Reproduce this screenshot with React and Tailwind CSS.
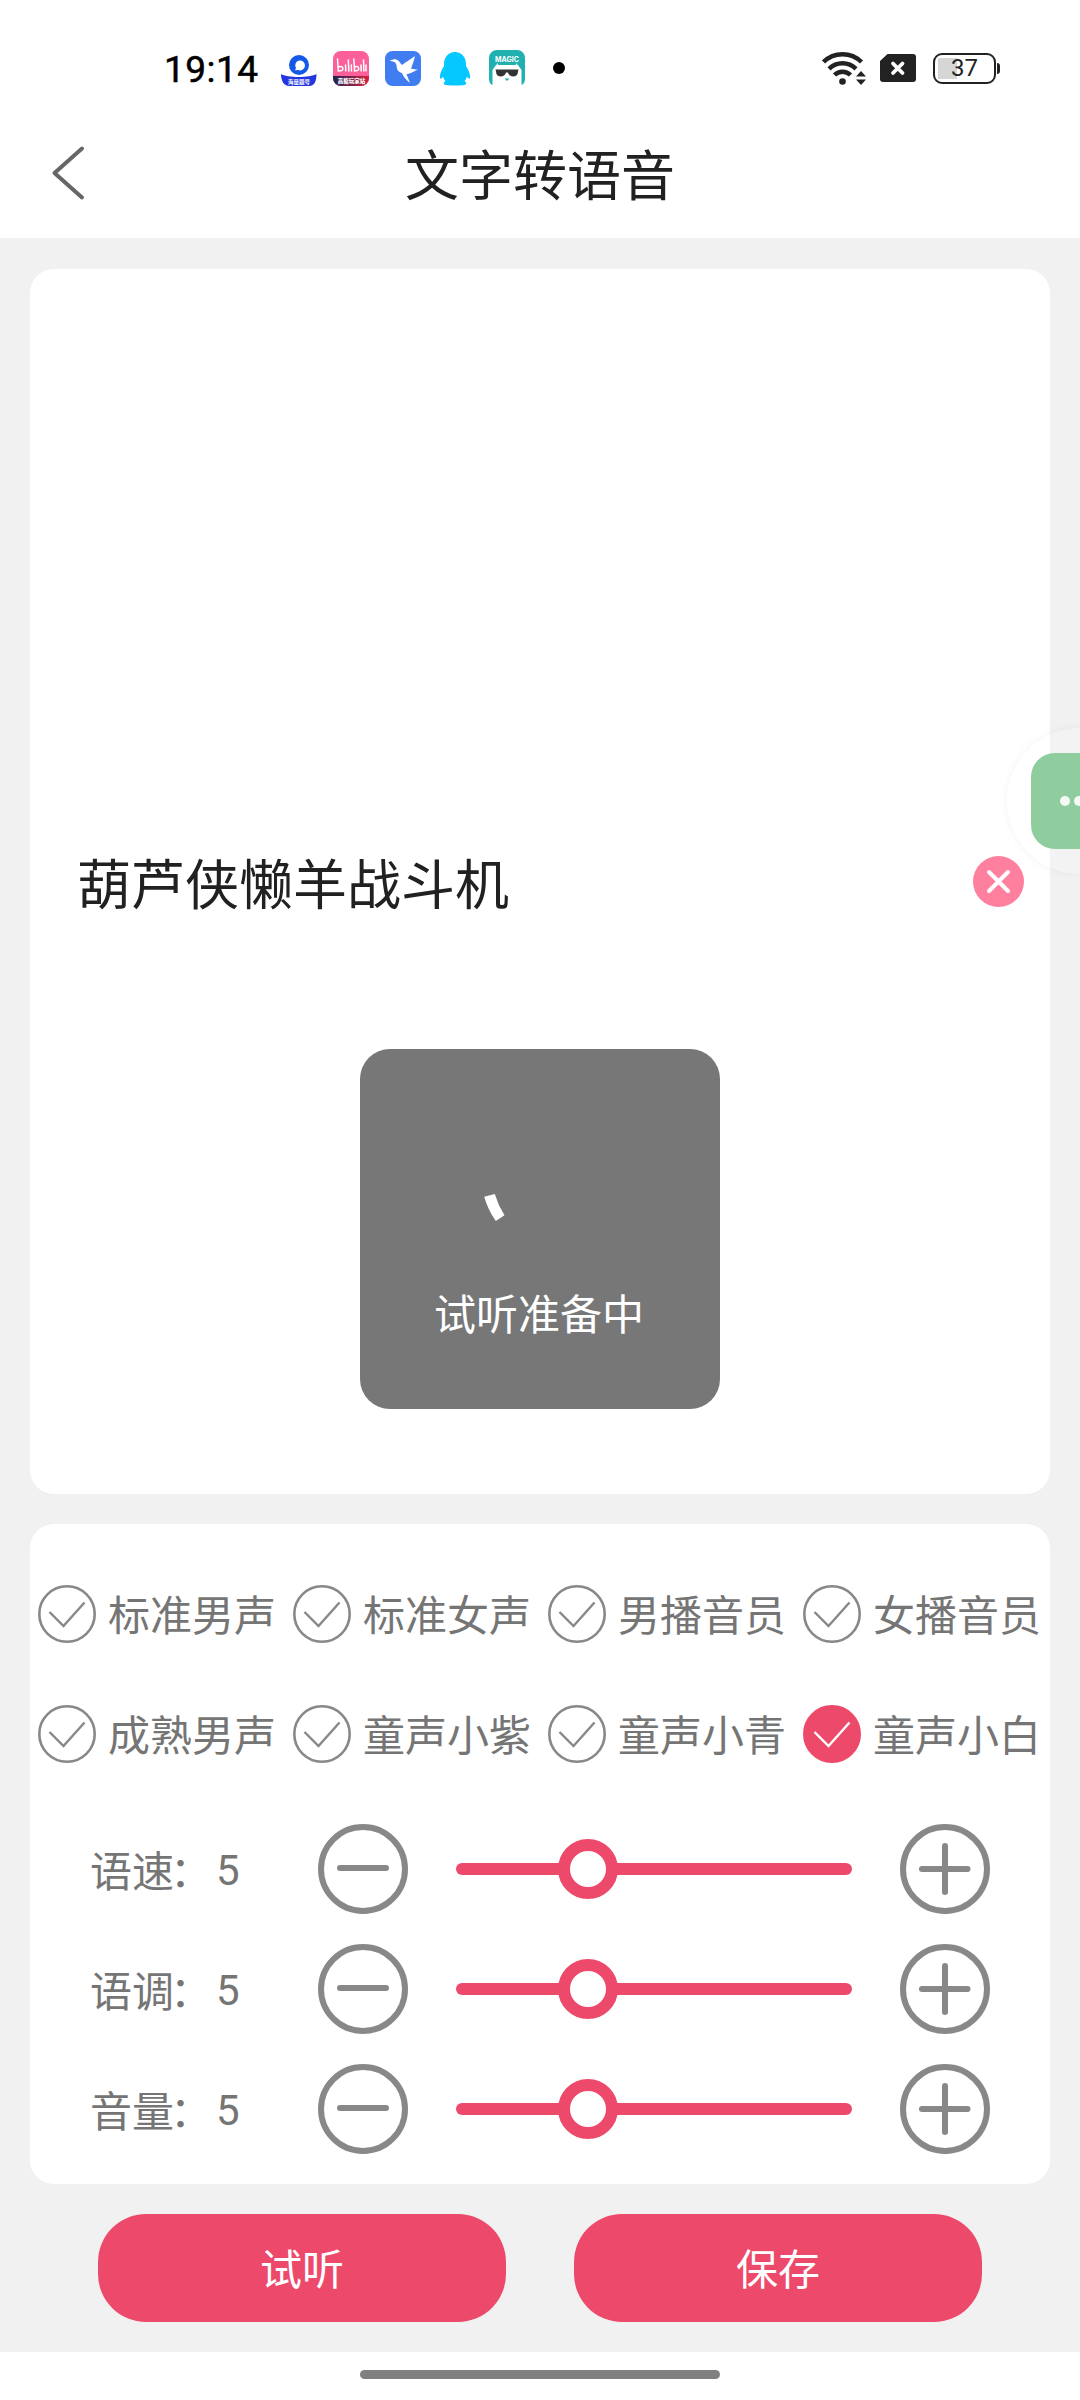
import React, { useState } from "react";

const VOICES = [
  "标准男声",
  "标准女声",
  "男播音员",
  "女播音员",
  "成熟男声",
  "童声小紫",
  "童声小青",
  "童声小白",
];

const MIN = 0;
const MAX = 15;

function StatusBar() {
  return (
    <div className="flex h-[136px] items-center pl-[164px] pr-[80px]">
      <span className="w-[117px] pt-[2px] font-['Roboto'] text-[37px] leading-none tracking-[0.5px] text-black [-webkit-text-stroke:0.5px_black]">
        19:14
      </span>
      <div className="flex items-center gap-4">
        <svg className="h-9 w-9" viewBox="0 0 36 36">
          <circle cx="18" cy="15" r="10" fill="#1458e8" />
          <path d="M18 10.5a5 5 0 1 1-1 9.500l-3 .2 1-2.200a5 5 0 0 1 3-7.500z" fill="#fff" />
          <path d="M0 24c6 4 29 4 35.500 0 0 7-2 12-7 12H8c-5 0-8-5-8-12z" fill="#2436e0" />
          <text x="18" y="33.500" textAnchor="middle" fontSize="5.500" fontWeight="700" fill="#fff" fontFamily="Noto Sans CJK SC">
            海量题号
          </text>
        </svg>
        <svg className="h-9 w-9" viewBox="0 0 36 36">
          <defs>
            <linearGradient id="bili" x1="0" x2="1">
              <stop offset="0" stopColor="#1c2350" />
              <stop offset="1" stopColor="#d8203c" />
            </linearGradient>
            <clipPath id="biliClip">
              <rect y="1" width="36" height="35" rx="8" />
            </clipPath>
          </defs>
          <g clipPath="url(#biliClip)">
            <rect y="1" width="36" height="35" fill="#fb609a" />
            <rect y="26" width="36" height="11" fill="url(#bili)" />
          </g>
          <g fill="none" stroke="#fff" strokeWidth="1.500" strokeLinecap="round">
            <path d="M4.500 9l.8 12c4 0 5-1.500 4.500-3s-2-2-4-1M12.500 15l.3 6M15.300 10l.5 11M18.300 15l.2 6" />
            <path d="M20.800 9l.8 12c4 0 4.500-1.500 4-3s-2-2-4-1M28 15l.2 6M30.500 10l.4 11M33 15v6" />
          </g>
          <text x="18.500" y="33" textAnchor="middle" fontSize="5.500" fontWeight="800" fill="#fff" fontFamily="Noto Sans CJK SC">
            高能玩家站
          </text>
        </svg>
        <svg className="h-9 w-9" viewBox="0 0 36 36">
          <rect y="1" width="36" height="35" rx="7.500" fill="#3f7df0" />
          <path
            d="M4.500 10.500C8 10 9 9 11 9.500c3 .7 4 3.500 6 5.500 4-3 8-5.500 13-9-1 4-2.500 9-4 12.500 2.500.8 5 1 7 1-3 1.500-6 3-8.500 4-2 .6-3 .5-3 .5l3.500 9c-4-3.500-7-6.500-8-10-2-.5-4.500-2-5-4.500-.4-3-.5-5-2.500-6.500z"
            fill="#fff"
          />
        </svg>
        <svg className="h-9 w-9" viewBox="0 0 36 36">
          <path
            d="M18 2c6.500 0 11 5 11 12v2c2.500 4 4.500 8 4 12-.3 1.300-1.800.5-3-1.500-.5 2-1.500 3.500-2.500 4.500 1.500.8 2 2 1.500 3s-3 1.500-11 1.500-10.500-.5-11-1.500 0-2.200 1.500-3c-1-1-2-2.500-2.500-4.500-1.200 2-2.700 2.800-3 1.500-.5-4 1.500-8 4-12v-2c0-7 4.500-12 11-12z"
            fill="#04c8ff"
          />
        </svg>
        <svg className="h-9 w-9" viewBox="0 0 36 36">
          <path d="M8 0h20a8 8 0 0 1 8 8v20c0 4-1 6-3.500 7V20L29 15H7l-3.500 5v15C1 34 0 32 0 28V8a8 8 0 0 1 8-8z" fill="#20b0b0" />
          <path d="M8 13l3 4h14l3-4 1 9c1 7-4 12-11 12S5 29 6 22z" fill="#fff" />
          <path d="M6.500 19.500h23l-1 4.500c-1 3.500-8.500 3.500-9.500-1.500h-2c-1 5-8.500 5-9.500 1.500z" fill="#333" />
          <path d="M15.500 28.500h5l-2.500 2.500z" fill="#20b0b0" />
          <text x="18" y="11.500" textAnchor="middle" fontSize="7" fontWeight="700" fill="#fff" fontFamily="Inter">
            MAGIC
          </text>
        </svg>
      </div>
      <span className="ml-7 h-3 w-3 rounded-full bg-black" />

      <div className="ml-auto flex items-center">
        <svg className="h-9 w-[46px]" viewBox="0 0 46 36">
          <g fill="none" stroke="#222" strokeWidth="4.500">
            <path d="M1.500 12a27 27 0 0 1 38 0" />
            <path d="M7 18.800a19.500 19.500 0 0 1 27 0" />
            <path d="M12.500 25a11.500 11.500 0 0 1 16 0" />
          </g>
          <circle cx="20.500" cy="31.500" r="3.300" fill="#222" />
          <path d="M34 26.500l5-5.500 5 5.500zM34 29.500l5 5.500 5-5.500z" fill="#222" />
        </svg>
        <svg className="ml-3 h-7 w-9" viewBox="0 0 36 28">
          <path d="M7.500 0H33a3 3 0 0 1 3 3v22a3 3 0 0 1-3 3H3a3 3 0 0 1-3-3V7z" fill="#222" />
          <path d="M13 9.500l9.500 9.500M22.500 9.500L13 19" stroke="#fff" strokeWidth="3.800" strokeLinecap="round" />
        </svg>
        <div className="ml-[17px] flex h-[31px] w-[63px] items-center justify-center rounded-[9px] border-[2.500px] border-[#222] bg-white bg-[linear-gradient(#d6d6d6,#d6d6d6)] bg-[length:19px_21px] bg-[position:3px_center] bg-no-repeat font-['Roboto'] text-[24px] leading-none text-[#222]">
          37
        </div>
        <span className="ml-[1px] h-[11px] w-[3px] rounded-r-sm bg-[#222]" />
      </div>
    </div>
  );
}

function CheckIcon({ checked }) {
  return (
    <svg className="h-[58px] w-[58px] shrink-0" viewBox="0 0 58 58" fill="none">
      <circle
        cx="29"
        cy="29"
        r="27.700"
        fill={checked ? "#ed4a6b" : "none"}
        stroke={checked ? "#ed4a6b" : "#888"}
        strokeWidth="2.600"
      />
      <path
        d="M11.500 27L25.500 41L46.500 17.500"
        stroke={checked ? "#fff" : "#888"}
        strokeWidth="2.400"
      />
    </svg>
  );
}

function RoundButton({ type, onClick }) {
  return (
    <button onClick={onClick} className="shrink-0">
      <svg className="h-[90px] w-[90px]" viewBox="0 0 90 90" fill="none" stroke="#888" strokeWidth="6" strokeLinecap="round">
        <circle cx="45" cy="45" r="42" />
        <path d={type === "plus" ? "M22 45H67.500M45 22V68" : "M22 44H68"} />
      </svg>
    </button>
  );
}

function SliderRow({ label, value, onChange }) {
  return (
    <div className="flex h-[120px] items-center pl-[60px]">
      <div className="flex w-[228px] items-center text-[42px] leading-[50px]">
        <span>{label}</span>
        <span className="-ml-1 w-[46px]">：</span>
        <span className="pt-[3px] font-['Roboto']">{value}</span>
      </div>
      <RoundButton type="minus" onClick={() => onChange(Math.max(MIN, value - 1))} />
      <div className="relative mx-12 h-3 w-[396px] rounded-full bg-[#ed4a6b]">
        <span
          className="absolute top-1/2 h-[60px] w-[60px] -translate-x-1/2 -translate-y-1/2 rounded-full border-[12px] border-[#ed4a6b] bg-white"
          style={{ left: `${(value / MAX) * 100}%` }}
        />
      </div>
      <RoundButton type="plus" onClick={() => onChange(Math.min(MAX, value + 1))} />
    </div>
  );
}

function LoadingToast() {
  return (
    <div className="absolute top-[1049px] left-[360px] flex h-[360px] w-[360px] flex-col items-center rounded-[30px] bg-[#777] pt-[100px]">
      <svg className="h-[115px] w-[115px]" viewBox="0 0 115 115">
        <path d="M1.200 47.700L11.800 45Q15 56 21.500 66.300L12.800 72Q5 61 1.200 47.700z" fill="#fff" />
      </svg>
      <span className="mt-[23px] pr-[2px] text-[42px] leading-[50px] text-white">试听准备中</span>
    </div>
  );
}

// bubble docked half way off the right edge
function FloatingBubble() {
  return (
    <div className="absolute top-[728px] right-0 flex h-[146px] w-[73px] items-center rounded-l-full bg-white/20 pl-6 shadow-[0_0_8px_rgba(0,0,0,0.05)]">
      <div className="flex h-24 w-[49px] items-center gap-1 overflow-hidden rounded-l-[24px] bg-[#8fcd9f] pl-[29px]">
        <span className="h-2.5 w-2.5 shrink-0 rounded-full bg-white/90" />
        <span className="h-2.5 w-2.5 shrink-0 rounded-full bg-white/90" />
      </div>
    </div>
  );
}

export default function App() {
  const [voice, setVoice] = useState("童声小白");
  const [speed, setSpeed] = useState(5);
  const [pitch, setPitch] = useState(5);
  const [volume, setVolume] = useState(5);
  const [text, setText] = useState("葫芦侠懒羊战斗机");

  return (
    <div className="relative flex h-[2400px] w-[1080px] flex-col overflow-hidden bg-[#f1f1f1] font-['Noto_Sans_CJK_SC',sans-serif] text-[#757575]">
      <header className="h-[238px] shrink-0 bg-white">
        <StatusBar />
        <div className="grid h-[74px] grid-cols-3 items-center">
          <svg className="ml-[51px] h-14 w-9" viewBox="0 0 36 56" fill="none">
            <path d="M31 3.500L3.500 28L31 52.500" stroke="#666" strokeWidth="4" strokeLinecap="round" strokeLinejoin="round" />
          </svg>
          <h1 className="text-center text-[54px] leading-[74px] whitespace-nowrap text-[#212121]">文字转语音</h1>
        </div>
      </header>

      <main className="flex flex-1 flex-col px-[30px] pt-[31px]">
        <section className="flex h-[1225px] items-center justify-between rounded-[24px] bg-white pr-[26px] pl-[47px]">
          <span className="text-[54px] leading-[64px] text-[#212121]">{text}</span>
          <button onClick={() => setText("")}>
            <svg className="h-[51px] w-[51px]" viewBox="0 0 51 51">
              <circle cx="25.500" cy="25.500" r="25.500" fill="#ff7f9f" />
              <path d="M16 16L35 35M35 16L16 35" stroke="#fff" strokeWidth="4" strokeLinecap="round" />
            </svg>
          </button>
        </section>

        <section className="mt-[30px] h-[660px] rounded-[24px] bg-white pt-[30px]">
          <div className="grid grid-cols-4">
            {VOICES.map((item) => (
              <button
                key={item}
                onClick={() => setVoice(item)}
                className="flex h-[120px] items-center gap-3 pl-2 text-[42px] leading-[50px] whitespace-nowrap"
              >
                <CheckIcon checked={item === voice} />
                <span className="pb-[2px]">{item}</span>
              </button>
            ))}
          </div>
          <div className="mt-[15px]">
            <SliderRow label="语速" value={speed} onChange={setSpeed} />
            <SliderRow label="语调" value={pitch} onChange={setPitch} />
            <SliderRow label="音量" value={volume} onChange={setVolume} />
          </div>
        </section>

        <div className="mt-[30px] flex justify-center gap-[68px] text-[42px] leading-[50px] text-white">
          <button className="h-[108px] w-[408px] rounded-[48px] bg-[#ed4a6b] pb-[2px]">试听</button>
          <button className="h-[108px] w-[408px] rounded-[48px] bg-[#ed4a6b] pb-[2px]">保存</button>
        </div>
      </main>

      <footer className="flex h-12 shrink-0 justify-center bg-white pt-[18px]">
        <span className="h-[9px] w-[360px] rounded-full bg-[#808080]" />
      </footer>

      <LoadingToast />
      <FloatingBubble />
    </div>
  );
}
